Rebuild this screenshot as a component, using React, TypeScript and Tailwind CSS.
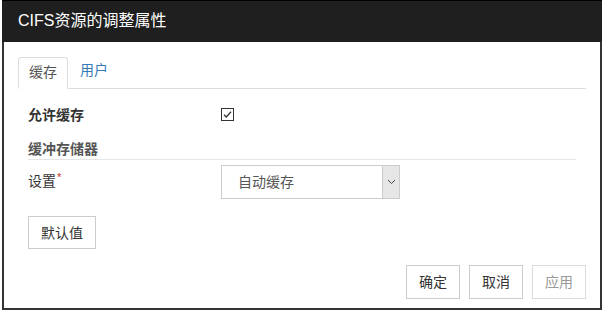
import React from "react";

const font = { fontFamily: '"Liberation Sans", "Noto Sans CJK SC", sans-serif' };

function Btn({ children, disabled }: { children: React.ReactNode; disabled?: boolean }) {
  return (
    <button
      className={
        disabled
          ? "h-[34px] px-[12px] border border-[#dcdcdc] bg-white text-[14px] leading-[20px] text-[#999]"
          : "h-[34px] px-[12px] border border-[#cccccc] bg-white text-[14px] leading-[20px] text-[#333]"
      }
    >
      {children}
    </button>
  );
}

export default function App() {
  return (
    <div className="w-[604px] h-[312px] bg-white" style={font}>
      <div className="ml-[2px] w-[600px] h-[310px] flex flex-col">
        <div className="h-[42px] bg-[#1f1f1f] border-t border-black flex items-center pl-[16px] pb-[1px] text-white text-[16px]">
          CIFS资源的调整属性
        </div>
        <div className="flex-1 border-x-2 border-b-2 border-[#333] px-[14px]">
          <div className="mt-[15px] h-[32px] flex items-end border-b border-[#dddddd]">
            <div className="-mb-px h-[32px] px-[10px] border border-[#dddddd] border-b-white rounded-t-[3px] bg-white text-[14px] leading-[29px] text-[#555]">
              缓存
            </div>
            <div className="ml-[2px] h-[32px] px-[10px] text-[14px] leading-[29px] text-[#337ab7]">
              用户
            </div>
          </div>
          <div className="px-[10px]">
            <div className="mt-[16px] h-[20px] flex items-center">
              <div className="w-[193px] text-[14px] font-bold text-[#333] leading-[20px]">允许缓存</div>
              <svg width="13" height="13" viewBox="0 0 13 13" className="-mt-[1px]">
                <rect x="0.5" y="0.5" width="12" height="12" fill="white" stroke="#333" />
                <path d="M3 6.8 L5.3 9 L10 3.8" fill="none" stroke="#333" strokeWidth="1.3" />
              </svg>
            </div>
            <div className="mt-[15px] h-[20px] border-b border-[#e5e5e5] text-[14px] font-bold text-[#555] leading-[19px]">
              缓冲存储器
            </div>
            <div className="mt-[5px] flex items-center">
              <div className="w-[193px] text-[14px] text-[#333] leading-[20px] -mt-[2px]">
                设置<sup className="text-[#c9302c] text-[11px] ml-[1px]">*</sup>
              </div>
              <div className="w-[179px] h-[34px] border border-[#cccccc] flex">
                <div className="flex-1 pl-[16px] flex items-center text-[14px] text-[#555]">自动缓存</div>
                <div className="w-[17px] h-full bg-[#e6e6e6] border-l border-[#cccccc] flex items-center justify-center">
                  <svg width="9" height="6" viewBox="0 0 9 6">
                    <path d="M1 1 L4.5 4.5 L8 1" fill="none" stroke="#444" strokeWidth="1" />
                  </svg>
                </div>
              </div>
            </div>
            <div className="mt-[17px]">
              <button className="h-[33px] px-[12px] border border-[#cccccc] bg-white text-[14px] leading-[20px] text-[#333]">
                默认值
              </button>
            </div>
          </div>
          <div className="mt-[16px] flex justify-end gap-[9px]">
            <Btn>确定</Btn>
            <Btn>取消</Btn>
            <Btn disabled>应用</Btn>
          </div>
        </div>
      </div>
    </div>
  );
}
